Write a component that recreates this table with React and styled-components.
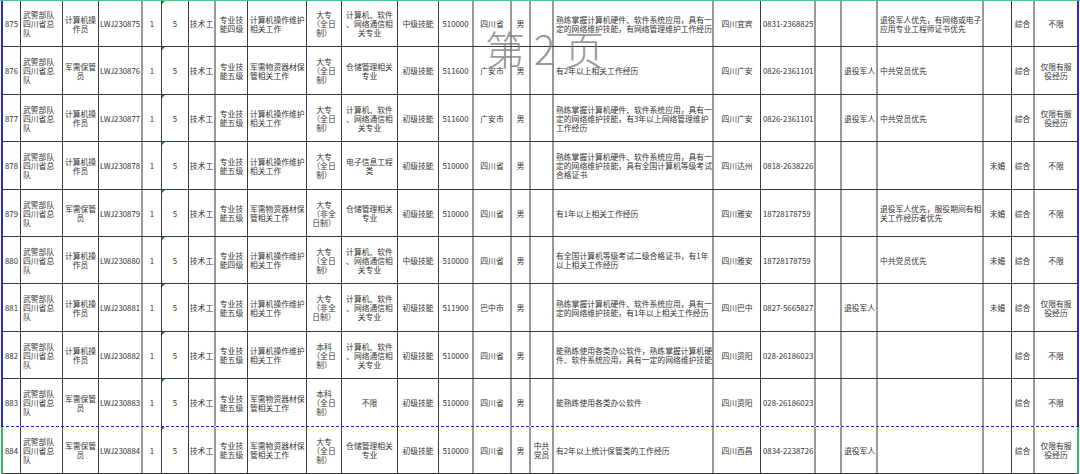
import React from "react"
import styled, { createGlobalStyle, css } from "styled-components"

const GlobalStyle = createGlobalStyle`
  html, body {
    margin: 0;
    padding: 0;
    background: #ffffff;
  }
  body {
    font-family: "Noto Sans CJK SC", "Liberation Sans", sans-serif;
  }
`

// column widths (px), line tone at the right edge, text alignment
const COLUMNS = [
  { w: 18, align: "center" },
  { w: 42, align: "left" },
  { w: 36, align: "center" },
  { w: 44, align: "center", tone: "grey" },
  { w: 19, align: "center" },
  { w: 27, align: "center", flag: true },
  { w: 27, align: "center", tone: "grey" },
  { w: 32, align: "center" },
  { w: 59, align: "left" },
  { w: 35, align: "center" },
  { w: 56, align: "center" },
  { w: 41, align: "center" },
  { w: 35, align: "center", tone: "grey" },
  { w: 38, align: "center", tone: "grey" },
  { w: 19, align: "center", tone: "grey" },
  { w: 23, align: "center", tone: "grey" },
  { w: 160, align: "left", tone: "grey" },
  { w: 47, align: "center" },
  { w: 55, align: "left", tone: "grey" },
  { w: 26, align: "center", tone: "grey" },
  { w: 36, align: "left", tone: "grey" },
  { w: 106, align: "left", tone: "grey" },
  { w: 28, align: "center" },
  { w: 23, align: "center", tone: "grey" },
  { w: 42, align: "center", last: true },
]

const ORG = "武警部队\n四川省总\n队"
const COMP = "计算机操\n作员"
const KEEP = "军需保管\n员"
const COMP_WORK = "计算机操作维护\n相关工作"
const KEEP_WORK = "军需物资器材保\n管相关工作"
const FULL = "大专\n（全日\n制）"
const PART = "大专\n（非全\n日制）"
const BEN = "本科\n（全日\n制）"
const IT = "计算机、软件\n、网络通信相\n关专业"
const STORE = "仓储管理相关\n专业"
const VET = "仅限有服\n役经历"

const ROWS = [
  { h: 46, cells: ["875", ORG, COMP, "LWJ230875", "1", "5", "技术工", "专业技\n能四级", COMP_WORK, FULL, IT, "中级技能", "510000", "四川省", "男", "",
    "熟练掌握计算机硬件、软件系统应用，具有一\n定的网络维护技能，有网络管理维护工作经历", "四川宜宾", "0831-2368825", "", "",
    "退役军人优先，有网络或电子\n应用专业工程师证书优先", "", "综合", "不限"] },
  { h: 48, cells: ["876", ORG, KEEP, "LWJ230876", "1", "5", "技术工", "专业技\n能五级", KEEP_WORK, FULL, STORE, "初级技能", "511600", "广安市", "男", "",
    "有2年以上相关工作经历", "四川广安", "0826-2361101", "", "退役军人", "中共党员优先", "", "综合", VET] },
  { h: 47, cells: ["877", ORG, COMP, "LWJ230877", "1", "5", "技术工", "专业技\n能五级", COMP_WORK, FULL, IT, "初级技能", "511600", "广安市", "男", "",
    "熟练掌握计算机硬件、软件系统应用，具有一\n定的网络维护技能，有3年以上网络管理维护\n工作经历", "四川广安", "0826-2361101", "", "退役军人", "中共党员优先", "", "综合", VET] },
  { h: 48, cells: ["878", ORG, COMP, "LWJ230878", "1", "5", "技术工", "专业技\n能五级", COMP_WORK, FULL, "电子信息工程\n类", "初级技能", "510000", "四川省", "男", "",
    "熟练掌握计算机硬件、软件系统应用，具有一\n定的网络维护技能，具有全国计算机等级考试\n合格证书", "四川达州", "0818-2638226", "", "", "", "未婚", "综合", "不限"] },
  { h: 47, cells: ["879", ORG, KEEP, "LWJ230879", "1", "5", "技术工", "专业技\n能五级", KEEP_WORK, PART, STORE, "初级技能", "510000", "四川省", "男", "",
    "有1年以上相关工作经历", "四川雅安", "18728178759", "", "",
    "退役军人优先，服役期间有相\n关工作经历者优先", "未婚", "综合", "不限"] },
  { h: 47, cells: ["880", ORG, COMP, "LWJ230880", "1", "5", "技术工", "专业技\n能四级", COMP_WORK, FULL, IT, "中级技能", "510000", "四川省", "男", "",
    "有全国计算机等级考试二级合格证书，有1年\n以上相关工作经历", "四川雅安", "18728178759", "", "", "中共党员优先", "未婚", "综合", "不限"] },
  { h: 48, cells: ["881", ORG, COMP, "LWJ230881", "1", "5", "技术工", "专业技\n能五级", COMP_WORK, PART, IT, "初级技能", "511900", "巴中市", "男", "",
    "熟练掌握计算机硬件、软件系统应用，具有一\n定的网络维护技能，有1年以上相关工作经历", "四川巴中", "0827-5665827", "", "退役军人", "", "未婚", "综合", VET] },
  { h: 47, cells: ["882", ORG, COMP, "LWJ230882", "1", "5", "技术工", "专业技\n能五级", COMP_WORK, BEN, IT, "初级技能", "510000", "四川省", "男", "",
    "能熟练使用各类办公软件，熟练掌握计算机硬\n件、软件系统应用，具有一定的网络维护技能", "四川资阳", "028-26186023", "", "", "", "", "综合", "不限"] },
  { h: 48, pageBreak: true, cells: ["883", ORG, KEEP, "LWJ230883", "1", "5", "技术工", "专业技\n能五级", KEEP_WORK, BEN, "不限", "初级技能", "510000", "四川省", "男", "",
    "能熟练使用各类办公软件", "四川资阳", "028-26186023", "", "", "", "", "综合", "不限"] },
  { h: 47, next: true, cells: ["884", ORG, KEEP, "LWJ230884", "1", "5", "技术工", "专业技\n能五级", KEEP_WORK, FULL, STORE, "初级技能", "510000", "四川省", "男", "中共\n党员",
    "有2年以上统计保管类的工作经历", "四川西昌", "0834-2238726", "", "退役军人", "", "", "综合", VET] },
]

const Page = styled.div`
  position: relative;
  width: 1080px;
  height: 474px;
  overflow: hidden;
  background: #ffffff;
`

const Sheet = styled.div`
  display: flex;
  flex-direction: column;
  border-top: 1px solid #4cc493;
`

const Row = styled.div`
  display: grid;
  grid-template-columns: ${COLUMNS.map((c) => `${c.w}px`).join(" ")};
  height: ${({ h }) => h}px;
  box-sizing: border-box;
  margin-left: 1px;
  width: 1078px;
  border-left: 2px solid ${({ next }) => (next ? "#2fbf6a" : "#2a2ad6")};
  border-right: 2px solid ${({ next }) => (next ? "#2fbf6a" : "#2a2ad6")};
  border-bottom: ${({ pageBreak }) =>
    pageBreak ? "1px dashed #2222c8" : "1px solid #3a3a3a"};
`

const Cell = styled.div`
  position: relative;
  box-sizing: border-box;
  display: flex;
  align-items: center;
  justify-content: ${({ align }) =>
    align === "left" ? "flex-start" : "center"};
  padding: 0 ${({ align }) => (align === "left" ? "0 0 2px" : "1px")};
  text-align: ${({ align }) => align};
  white-space: pre;
  font-size: 7.8px;
  line-height: 9px;
  color: #333333;
  overflow: hidden;
  ${({ last }) => (last ? "" : css`
    border-right: ${({ tone }) =>
      tone === "grey" ? "2px solid #9a9a9a" : "1px solid #3a3a3a"};
  `)}
`

const Flag = styled.span`
  position: absolute;
  top: 0;
  left: 0;
  width: 0;
  height: 0;
  border-top: 3px solid #1e8c3a;
  border-right: 3px solid transparent;
`

const Watermark = styled.div`
  position: absolute;
  left: 485px;
  top: 24px;
  font-family: "Noto Sans CJK SC", sans-serif;
  font-weight: 300;
  font-size: 40px;
  line-height: 48px;
  color: rgba(120, 120, 120, 0.75);
  pointer-events: none;
`

export default function App() {
  return (
    <Page>
      <GlobalStyle />
      <Sheet>
        {ROWS.map((row) => (
          <Row key={row.cells[0]} h={row.h} pageBreak={row.pageBreak} next={row.next}>
            {row.cells.map((text, i) => {
              const col = COLUMNS[i]
              return (
                <Cell key={i} align={col.align} tone={col.tone} last={col.last}>
                  {col.flag && <Flag />}
                  {text}
                </Cell>
              )
            })}
          </Row>
        ))}
      </Sheet>
      <Watermark>第 2 页</Watermark>
    </Page>
  )
}
